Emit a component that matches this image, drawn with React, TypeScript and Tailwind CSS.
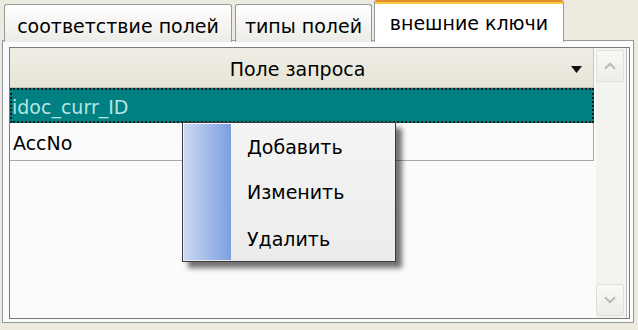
import { ChevronDown, ChevronUp } from "lucide-react";

const font = { fontFamily: '"DejaVu Sans", Verdana, sans-serif' };

function Tab({ label, active, className }: { label: string; active?: boolean; className: string }) {
  if (active) {
    return (
      <div className={`relative z-10 flex h-[42px] flex-col overflow-hidden rounded-t-[3px] border-x border-[#919b9c] bg-white ${className}`}>
        <div className="h-[2px] bg-[#e68b2c]" />
        <div className="h-[2px] bg-[#ffc73c]" />
        <div className="flex flex-1 items-start justify-center pt-[5px] text-[19px] text-black">{label}</div>
      </div>
    );
  }
  return (
    <div
      className={`relative flex h-[38px] items-start justify-center rounded-t-[3px] border border-b-0 border-[#919b9c] bg-gradient-to-b from-white to-[#ecebe6] pt-[7px] text-[19px] text-black ${className}`}
    >
      {label}
    </div>
  );
}

function ScrollButton({ up }: { up?: boolean }) {
  return (
    <div className="flex h-[32px] w-[28px] items-center justify-center rounded-[2px] border border-[#e0e0d8] bg-gradient-to-b from-[#f8f8f4] to-[#eeeee8]">
      {up ? (
        <ChevronUp className="h-[18px] w-[18px] text-[#b8b8b8]" strokeWidth={2.5} />
      ) : (
        <ChevronDown className="h-[18px] w-[18px] text-[#b8b8b8]" strokeWidth={2.5} />
      )}
    </div>
  );
}

export default function App() {
  return (
    <div className="relative h-[330px] w-[638px] overflow-hidden bg-[#edebe0]" style={font}>
      {/* tab strip */}
      <div className="flex h-[42px] items-end pl-[4px]">
        <Tab label="соответствие полей" className="w-[228px]" />
        <Tab label="типы полей" className="ml-[3px] w-[137px]" />
        <Tab label="внешние ключи" active className="ml-[2px] w-[190px]" />
      </div>

      {/* panel */}
      <div className="ml-[2px] mt-[-2px] h-[283px] w-[632px] border border-[#919b9c] bg-[#fcfcfc] pl-[6px] pt-[6px]">
        <div className="flex h-[272px] w-[621px] border border-[#7a7a7a] bg-[#fbfbfb]">
          {/* column */}
          <div className="flex w-[585px] flex-col">
            <div className="flex h-[40px] items-center border-b border-r border-[#c8c6b8] bg-gradient-to-b from-[#f0efe6] to-[#e6e4d6] pt-[4px]">
              <span className="flex-1 pl-[14px] text-center text-[19px] text-black">Поле запроса</span>
              <svg width="11" height="7" viewBox="0 0 11 7" className="mr-[11px]">
                <path d="M0 0h11L5.5 7z" fill="#111" />
              </svg>
            </div>
            <div className="flex h-[35px] items-center bg-[#008080] pl-[2px] pt-[3px] text-[19px] text-[#b8e4e4] outline-2 -outline-offset-2 outline-[#1a1a1a] outline-dotted">
              idoc_curr_ID
            </div>
            <div className="flex h-[38px] items-center border-b border-r border-[#a8a8a8] pl-[3px] pt-[3px] text-[19px] text-black">
              AccNo
            </div>
            <div className="flex-1" />
          </div>
          {/* scrollbar */}
          <div className="ml-[2px] flex w-[30px] flex-col justify-between bg-[#f3f3ef] py-[2px]">
            <ScrollButton up />
            <ScrollButton />
          </div>
          <div className="w-[3px] border-l border-[#c0c0c0]" />
        </div>
      </div>

      {/* context menu */}
      <div className="absolute left-[182px] top-[122px] flex h-[140px] w-[214px] border border-[#3c3c3c] bg-gradient-to-b from-[#f4f4f4] to-[#ececec] p-[1px] shadow-[6px_6px_5px_rgba(0,0,0,0.55)]">
        <div className="w-[47px] bg-gradient-to-r from-[#cbdaf1] to-[#7c9fe0]" />
        <div className="flex flex-1 flex-col pl-[16px] text-[19px] leading-[22px] text-black">
          <span className="mt-[12px]">Добавить</span>
          <span className="mt-[23px]">Изменить</span>
          <span className="mt-[25px]">Удалить</span>
        </div>
      </div>
    </div>
  );
}
